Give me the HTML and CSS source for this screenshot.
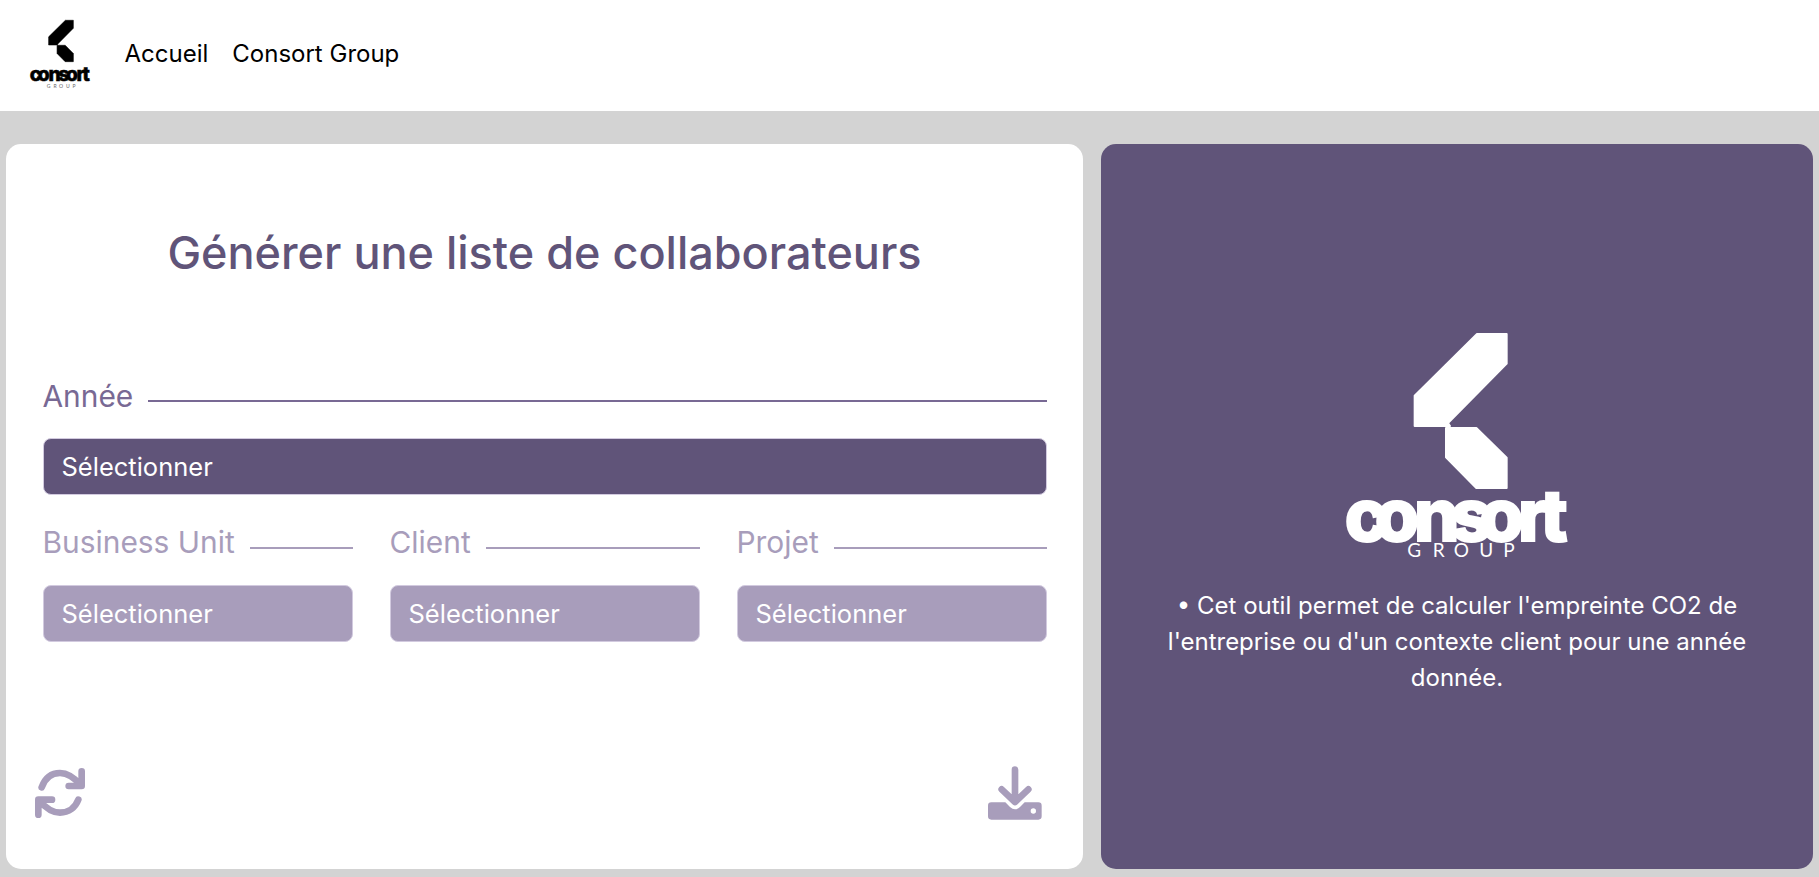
FILE: index.html
```html
<!DOCTYPE html>
<html lang="fr">
<head>
<meta charset="utf-8">
<title>Consort Group</title>
<link rel="stylesheet" href="styles.css">
</head>
<body>
<header class="navbar">
  <svg class="brand" viewBox="78 39 666 770" role="img" aria-label="Consort Group">
    <g class="mark">
      <path d="M471 42H560V131L384 309V318H284V227Z"/>
      <path d="M378 321H469L560 413V504H469L378 412Z"/>
    </g>
    <g transform="translate(0 56)">
      <text class="wordmark" y="662" x="74 164 282 393 478 594 661">consort</text>
      <text class="subline muted" y="737" x="262 338 401 478 550">GROUP</text>
    </g>
  </svg>
  <nav class="links">
    <a>Accueil</a>
    <a>Consort Group</a>
  </nav>
</header>
<main class="content">
  <section class="card form-card">
    <h1 class="title">Générer une liste de collaborateurs</h1>
    <div class="fields">
      <div class="field year">
        <div class="legend"><span>Année</span><i class="rule"></i></div>
        <div class="select">Sélectionner</div>
      </div>
      <div class="field">
        <div class="legend"><span>Business Unit</span><i class="rule"></i></div>
        <div class="select">Sélectionner</div>
      </div>
      <div class="field">
        <div class="legend"><span>Client</span><i class="rule"></i></div>
        <div class="select">Sélectionner</div>
      </div>
      <div class="field">
        <div class="legend"><span>Projet</span><i class="rule"></i></div>
        <div class="select">Sélectionner</div>
      </div>
    </div>
    <div class="actions">
      <svg class="icon refresh" viewBox="44 54 150 150">
        <path d="M64 112C74 84 94 69 119 69C145 69 163 84 182 106M184 64V108H145M95 149H54V194M56 151C75 173 93 188 119 188C145 188 165 173 174 149"/>
      </svg>
      <svg class="icon download" viewBox="54 50 162 160">
        <path class="tray" fill-rule="evenodd" d="M64 158H106L120 172Q135 186 150 172L164 158H205Q215 158 215 168V200Q215 210 205 210H64Q54 210 54 200V168Q54 158 64 158ZM190 176A8 8 0 1 0 190 192A8 8 0 1 0 190 176Z"/>
        <path class="arrow" d="M135 60V154M95 119L135 157L175 119"/>
      </svg>
    </div>
  </section>
  <aside class="card info-card">
    <svg class="logo" viewBox="78 39 666 676" role="img" aria-label="Consort Group">
      <g class="mark">
        <path d="M471 42H560V131L384 309L390 318H284V227Z"/>
        <path d="M378 324H469L560 413V504H469L378 412Z"/>
      </g>
      <text class="wordmark" y="662" x="74 164 282 393 478 594 661">consort</text>
      <text class="subline" y="711" x="262 338 401 478 550">GROUP</text>
    </svg>
    <p class="description">• Cet outil permet de calculer l'empreinte CO2 de l'entreprise ou d'un contexte client pour une année donnée.</p>
  </aside>
</main>
</body>
</html>
```
FILE: styles.css
```css
* { box-sizing: border-box; }
body {
  margin: 0;
  height: 877px;
  display: flex;
  flex-direction: column;
  background: #d3d3d3;
  font-family: Inter, "Liberation Sans", sans-serif;
  overflow: hidden;
}
.navbar {
  height: 111px;
  display: flex;
  align-items: flex-start;
  background: #fff;
  padding: 20px 30px 0;
}
.brand { width: 60px; height: 69px; overflow: visible; }
.links {
  display: flex;
  gap: 24px;
  margin: 16px 0 0 34.5px;
  font-size: 24px;
  line-height: 36px;
  color: #000;
}
.content {
  flex: 1;
  display: grid;
  grid-template-columns: 1077px 712px;
  gap: 18px;
  padding: 33px 6px 8px;
}
.card { border-radius: 15px; }
.form-card {
  background: #fff;
  display: flex;
  flex-direction: column;
  padding: 82px 36.5px 49px 36.5px;
}
.title {
  margin: 0;
  text-align: center;
  font-size: 45px;
  line-height: 54px;
  font-weight: 500;
  color: #605479;
}
.fields {
  display: grid;
  grid-template-columns: repeat(3, 1fr);
  gap: 30px 37px;
  margin-top: 98px;
}
.field { color: #a89dbb; }
.year { grid-column: 1 / -1; color: #786994; }
.legend {
  display: flex;
  align-items: center;
  gap: 15px;
  height: 37px;
  margin-bottom: 23px;
  font-size: 29.9px;
  line-height: 37px;
}
.field:not(.year) .legend span { margin-top: -2px; }
.rule {
  flex: 1;
  height: 2px;
  margin-top: 9px;
  background: currentColor;
}
.select {
  height: 57px;
  padding-left: 18px;
  border: 1px solid #d2cadf;
  border-radius: 8px;
  background: #a89dbb;
  color: #fff;
  font-size: 25.5px;
  line-height: 55px;
}
.year .select { background: #605479; }
.actions {
  display: flex;
  justify-content: space-between;
  align-items: flex-end;
  margin: auto 4.5px 0 -7.5px;
}
.icon { fill: none; stroke: #a89dbb; }
.refresh {
  width: 50px;
  height: 50px;
  margin-bottom: 2px;
  stroke-width: 20;
  stroke-linecap: round;
  stroke-linejoin: round;
}
.download { width: 54px; height: 54px; }
.tray { fill: #a89dbb; stroke: none; }
.arrow { stroke-width: 20; stroke-linecap: round; stroke-linejoin: round; }
.info-card {
  background: #605479;
  color: #fff;
  display: flex;
  flex-direction: column;
  align-items: center;
  padding: 189px 50px 0;
}
.logo { width: 222px; height: 225.333px; overflow: visible; }
.brand, .logo { fill: currentColor; }
.mark { stroke: currentColor; stroke-width: 6; stroke-linejoin: round; }
.wordmark { font-weight: 800; font-size: 215px; stroke: currentColor; stroke-width: 6; }
.subline { font-family: Lato, sans-serif; font-weight: 400; font-size: 57px; }
.muted { fill: #666; }
.description {
  margin: 30px 0 0;
  text-align: center;
  font-size: 24px;
  line-height: 36px;
}
```
